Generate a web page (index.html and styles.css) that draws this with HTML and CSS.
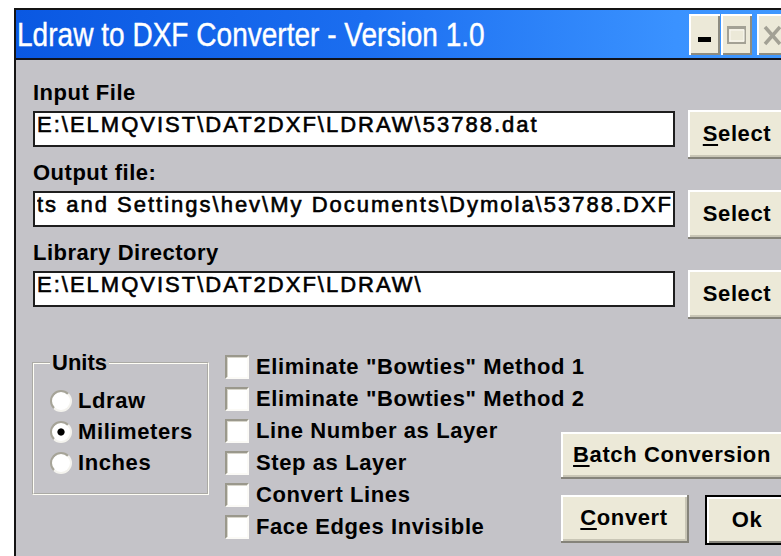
FILE: index.html
```html
<!DOCTYPE html>
<html lang="en">
<head>
<meta charset="utf-8">
<title>Ldraw to DXF Converter - Version 1.0</title>
<link rel="stylesheet" href="styles.css">
</head>
<body>
<div class="window">
  <div class="titlebar">
    <span class="title">Ldraw to DXF Converter - Version 1.0</span>
    <div class="caption-buttons">
      <span class="cap-btn">
        <svg width="31" height="41" viewBox="0 0 31 41"><rect x="9" y="23" width="13" height="5" fill="#000"/></svg>
      </span>
      <span class="cap-btn">
        <svg width="31" height="41" viewBox="0 0 31 41"><rect x="7" y="13" width="17" height="16" fill="none" stroke="#a3a195" stroke-width="2"/><rect x="6" y="12" width="19" height="3" fill="#a3a195"/><rect x="9" y="16" width="14" height="11" fill="none" stroke="#fbfaf4" stroke-width="1"/></svg>
      </span>
      <span class="cap-btn close">
        <svg width="31" height="41" viewBox="0 0 31 41"><path d="M8 13 L23 30 M23 13 L8 30" stroke="#a3a195" stroke-width="3.5" fill="none"/></svg>
      </span>
    </div>
  </div>

  <div class="client">
    <div class="field">
      <div class="label">Input File</div>
      <div class="row">
        <input class="path" type="text" value="E:\ELMQVIST\DAT2DXF\LDRAW\53788.dat" readonly>
        <button class="btn select" type="button"><u>S</u>elect</button>
      </div>
    </div>
    <div class="field">
      <div class="label">Output file:</div>
      <div class="row">
        <input class="path" type="text" value="ts and Settings\hev\My Documents\Dymola\53788.DXF" readonly>
        <button class="btn select" type="button">Select</button>
      </div>
    </div>
    <div class="field">
      <div class="label">Library Directory</div>
      <div class="row">
        <input class="path" type="text" value="E:\ELMQVIST\DAT2DXF\LDRAW\" readonly>
        <button class="btn select" type="button">Select</button>
      </div>
    </div>

    <div class="options">
      <fieldset class="units">
        <legend>Units</legend>
        <label class="opt"><input class="radio" type="radio" name="units"><span>Ldraw</span></label>
        <label class="opt"><input class="radio" type="radio" name="units" checked><span>Milimeters</span></label>
        <label class="opt"><input class="radio" type="radio" name="units"><span>Inches</span></label>
      </fieldset>

      <div class="checks">
        <label class="opt check"><input class="box" type="checkbox"><span>Eliminate "Bowties" Method 1</span></label>
        <label class="opt check"><input class="box" type="checkbox"><span>Eliminate "Bowties" Method 2</span></label>
        <label class="opt check"><input class="box" type="checkbox"><span>Line Number as Layer</span></label>
        <label class="opt check"><input class="box" type="checkbox"><span>Step as Layer</span></label>
        <label class="opt check"><input class="box" type="checkbox"><span>Convert Lines</span></label>
        <label class="opt check"><input class="box" type="checkbox"><span>Face Edges Invisible</span></label>
      </div>

      <div class="actions">
        <button class="btn batch" type="button"><u>B</u>atch Conversion</button>
        <div class="action-row">
          <button class="btn convert" type="button"><u>C</u>onvert</button>
          <button class="btn ok" type="button">Ok</button>
        </div>
      </div>
    </div>
  </div>
</div>
</body>
</html>
```

FILE: styles.css
```css
html, body {
  margin: 0;
  padding: 0;
  overflow: hidden;
  background: #fff;
}

body {
  font-family: "Liberation Sans", Arial, sans-serif;
  color: #000;
}

/* dialog frame */
.window {
  margin: 8px 0 0 14px;
  width: 776px;
  height: 560px;
  border-left: 2px solid #141414;
  border-top: 2px solid #141414;
  background: #c4c3c8;
}

/* caption bar */
.titlebar {
  display: flex;
  align-items: flex-start;
  height: 48px;
  padding-right: 4px;
  background: linear-gradient(to right, #0a58e2 0%, #1b6ef0 45%, #3a92ff 85%, #4099ff 100%);
  border-bottom: 2px solid #10131c;
}

.title {
  display: block;
  margin: 7px 0 0 1px;
  font-size: 33px;
  line-height: 36px;
  color: #fff;
  white-space: nowrap;
  -webkit-text-stroke: 0.4px #fff;
  transform: scaleX(0.85);
  transform-origin: left center;
}

.caption-buttons {
  margin-left: auto;
  margin-top: 4px;
  display: flex;
  gap: 1px;
}

.cap-btn {
  display: block;
  width: 31px;
  height: 41px;
  background: #ece9d8;
  box-shadow: inset 2px 2px 0 #fff, inset -2px -2px 0 #8e8c80;
}

.cap-btn svg {
  display: block;
}

.cap-btn.close {
  margin-left: 4px;
}

/* client area */
.client {
  padding: 20px 0 0 17px;
}

.field {
  height: 80px;
}

.label {
  font-size: 22px;
  font-weight: bold;
  letter-spacing: 0.5px;
  line-height: 26px;
  height: 30px;
  white-space: nowrap;
}

.row {
  display: flex;
  align-items: flex-start;
  gap: 13px;
}

.path {
  box-sizing: border-box;
  width: 642px;
  height: 36px;
  margin: 1px 0 0 0;
  padding: 0 0 8px 2px;
  border: 2px solid #1e1e1e;
  border-radius: 0;
  background: #fff;
  font-family: "Liberation Sans", Arial, sans-serif;
  font-size: 22px;
  letter-spacing: 2px;
  color: #000;
  -webkit-text-stroke: 0.6px #000;
  outline: none;
}

/* push buttons */
.btn {
  box-sizing: border-box;
  margin: 0;
  padding: 0;
  background: #ece9d8;
  border: none;
  border-right: 2px solid #85837a;
  border-bottom: 2px solid #85837a;
  box-shadow: inset 2px 2px 0 #fff, inset -2px -2px 0 #c9c6b6;
  font-family: "Liberation Sans", Arial, sans-serif;
  font-size: 22px;
  font-weight: bold;
  letter-spacing: 0.6px;
  color: #000;
  white-space: nowrap;
  text-align: center;
}

.btn u {
  text-decoration-thickness: 2px;
  text-underline-offset: 3px;
}

.select {
  width: 100px;
  height: 49px;
}

/* lower options */
.options {
  display: flex;
  align-items: flex-start;
  margin-top: 31px;
}

.units {
  box-sizing: border-box;
  flex: none;
  width: 177px;
  margin: 0 16px 0 -1px;
  padding: 10px 0 15px 16px;
  border: 2px groove #fffef6;
}

.units legend {
  padding: 0 2px;
  font-size: 22px;
  font-weight: bold;
  line-height: 24px;
}

.opt {
  display: flex;
  align-items: center;
  height: 31px;
  font-size: 22px;
  font-weight: bold;
  letter-spacing: 0.6px;
  white-space: nowrap;
}

.radio {
  appearance: none;
  -webkit-appearance: none;
  box-sizing: border-box;
  flex: none;
  width: 22px;
  height: 22px;
  margin: 0 6px 0 0;
  border-radius: 50%;
  border: 2px solid;
  border-color: #a6a498 #f4f3ee #f4f3ee #a6a498;
  background: #fff;
}

.radio:checked {
  background: radial-gradient(circle, #000 0 3.2px, #fff 4px);
}

.checks {
  flex: none;
  width: 336px;
}

.check {
  height: 32px;
}

.box {
  appearance: none;
  -webkit-appearance: none;
  box-sizing: border-box;
  flex: none;
  width: 24px;
  height: 24px;
  margin: 0 7px 0 0;
  border: 2px solid;
  border-color: #9a988c #fbfaf6 #fbfaf6 #9a988c;
  box-shadow: inset 1px 1px 0 #d8d6cc;
  background: #fff;
  border-radius: 0;
}

.actions {
  flex: none;
  padding-top: 81px;
  display: flex;
  flex-direction: column;
  gap: 16px;
}

.batch {
  width: 224px;
  height: 47px;
}

.action-row {
  display: flex;
  align-items: flex-start;
  gap: 16px;
}

.convert {
  width: 128px;
  height: 48px;
}

.ok {
  width: 84px;
  height: 50px;
  border: 2px solid #000;
  box-shadow: inset 2px 2px 0 #fff, inset -2px -2px 0 #85837a;
}
```
